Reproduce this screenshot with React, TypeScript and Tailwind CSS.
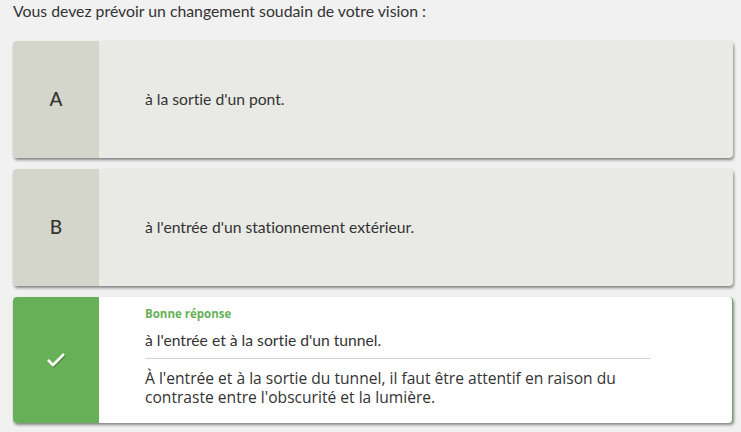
import { Check } from "lucide-react";

const options = [
  { letter: "A", text: "à la sortie d'un pont." },
  { letter: "B", text: "à l'entrée d'un stationnement extérieur." },
];

export default function App() {
  return (
    <div className="min-h-[432px] w-[741px] bg-[#f1f1f1] px-[13px] font-['Lato',sans-serif] text-[#333] [font-variant-ligatures:none]">
      <p className="text-[15.8px] leading-[22px]">Vous devez prévoir un changement soudain de votre vision :</p>

      <div className="mt-[19px] flex flex-col gap-[11px]">
        {options.map((o) => (
          <div
            key={o.letter}
            className="flex h-[117px] w-[720px] overflow-hidden rounded-[4px] bg-[#e9eae5] shadow-[1px_2px_3px_rgba(0,0,0,0.45)]"
          >
            <div className="flex w-[86px] shrink-0 items-center justify-center bg-[#d4d6cc] text-[19px] font-medium">
              {o.letter}
            </div>
            <div className="flex items-center pl-[46px] text-[15.7px]">{o.text}</div>
          </div>
        ))}

        <div className="flex h-[126px] w-[720px] overflow-hidden rounded-[4px] border-r border-[#67b057] bg-white shadow-[1px_2px_3px_rgba(0,0,0,0.45)]">
          <div className="flex w-[86px] shrink-0 items-center justify-center bg-[#67b057]">
            <Check className="h-[24px] w-[24px] text-white drop-shadow-[1px_1px_0_rgba(0,0,0,0.25)]" strokeWidth={2.6} strokeLinecap="butt" />
          </div>
          <div className="pl-[46px] pt-[9px]">
            <p className="font-['Open_Sans',sans-serif] text-[11.5px] font-bold leading-[16px] text-[#67b057]">Bonne réponse</p>
            <p className="mt-[8px] text-[15.7px] leading-[20px]">à l'entrée et à la sortie d'un tunnel.</p>
            <div className="mt-[8px] h-px w-[506px] bg-[#d4d6cc]" />
            <p className="mt-[10px] w-[506px] font-['Open_Sans',sans-serif] text-[15.6px] leading-[19px]">
              À l'entrée et à la sortie du tunnel, il faut être attentif en raison du contraste entre l'obscurité et la lumière.
            </p>
          </div>
        </div>
      </div>
    </div>
  );
}
